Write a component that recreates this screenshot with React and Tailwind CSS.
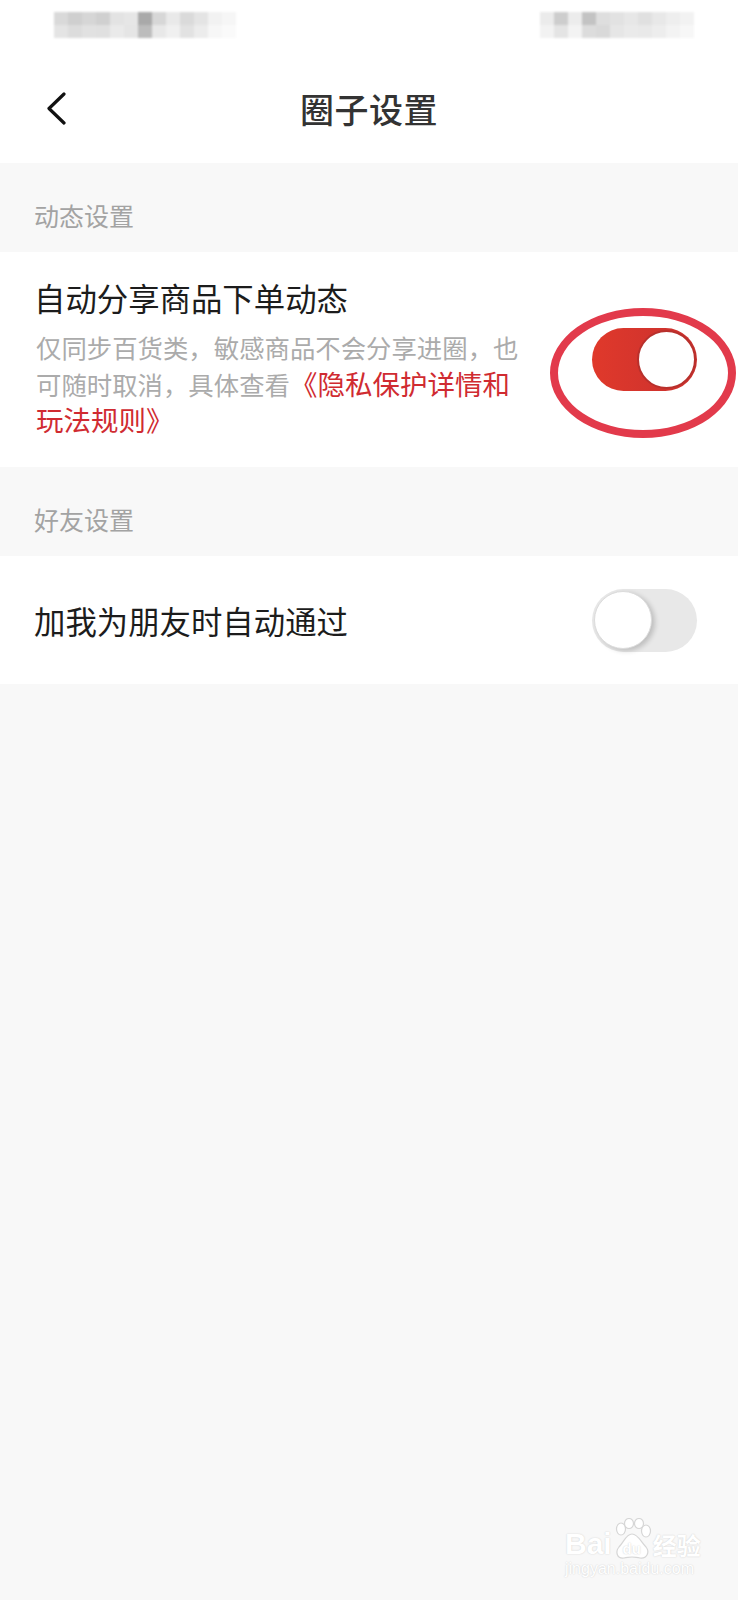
import React from "react";

const FONT = { fontFamily: '"Noto Sans CJK SC", "Noto Sans", sans-serif' };
const LATIN = { fontFamily: '"Liberation Sans", Arial, sans-serif' };

const leftTiles = [
  ["#d9d9d9", "#cfcfcf", "#d6d6d6", "#d0d0d0", "#e3e3e3", "#e6e6e6", "#a9a9a9", "#d7d7d7", "#e9e9e9", "#dadada", "#e4e4e4", "#f2f2f2", "#f6f6f6"],
  ["#e4e4e4", "#dcdcdc", "#e1e1e1", "#e0e0e0", "#eaeaea", "#e5e5e5", "#bcbcbc", "#e8e8e8", "#f0f0f0", "#e2e2e2", "#ececec", "#f7f7f7", "#fafafa"],
];
const rightTiles = [
  ["#ebebeb", "#cdcdcd", "#ececec", "#c3c3c3", "#dedede", "#e2e2e2", "#e7e7e7", "#e0e0e0", "#e8e8e8", "#eeeeee", "#f2f2f2"],
  ["#f2f2f2", "#e4e4e4", "#f3f3f3", "#dcdcdc", "#d9d9d9", "#e6e6e6", "#eaeaea", "#e9e9e9", "#ededed", "#f3f3f3", "#f7f7f7"],
];

function Mosaic({ rows }) {
  return (
    <div className="flex flex-col blur-[1px]">
      {rows.map((row, i) => (
        <div key={i} className="flex">
          {row.map((c, j) => (
            <div key={j} className="w-[14px] h-[13px]" style={{ background: c }} />
          ))}
        </div>
      ))}
    </div>
  );
}

function Toggle({ on }) {
  if (on) {
    return (
      <div className="relative w-[105px] h-[63px] rounded-full bg-gradient-to-r from-[#e0392b] to-[#c9302e] flex items-center justify-end pr-[1px]">
        <div className="w-[59px] h-[59px] rounded-full bg-white border-[2px] border-[#b8302c]" />
      </div>
    );
  }
  return (
    <div className="w-[105px] h-[63px] rounded-full bg-[#e8e8e8] flex items-center pl-[2px]">
      <div className="w-[58px] h-[58px] rounded-full bg-white border border-[#dcdcdc] shadow-[3px_2px_5px_rgba(0,0,0,0.18)]" />
    </div>
  );
}

function SectionLabel({ children }) {
  return (
    <div className="h-[89px] pt-[34px] pl-[34px] bg-[#f8f8f8]">
      <p className="text-[25px] leading-[36px] text-[#a3a3a3]">{children}</p>
    </div>
  );
}

function Paw() {
  return (
    <svg className="absolute inset-0" width="40" height="42" viewBox="0 0 40 42" fill="#fff" stroke="#d6d6d6" strokeWidth="1.2">
      <ellipse cx="9" cy="11" rx="4.5" ry="6" />
      <ellipse cx="17" cy="5.5" rx="4.5" ry="5" />
      <ellipse cx="27" cy="5.5" rx="4.5" ry="5" />
      <ellipse cx="34" cy="13" rx="4.5" ry="6" />
      <path d="M20 16 C26 16 29 24 34 29 C38 34 35 41 28 40 C24 39.5 22 39 20 39 C18 39 16 39.5 12 40 C5 41 3 34 7 29 C12 24 14 16 20 16 Z" />
    </svg>
  );
}

export default function App() {
  return (
    <div className="relative w-[738px] min-h-[1600px] bg-[#f8f8f8] overflow-hidden" style={FONT}>
      {/* status bar (pixelated) */}
      <div className="h-[54px] bg-white flex justify-between items-start pt-[12px] pl-[54px] pr-[44px]">
        <Mosaic rows={leftTiles} />
        <Mosaic rows={rightTiles} />
      </div>

      {/* header */}
      <div className="relative h-[109px] bg-white flex items-center justify-center">
        <svg
          className="absolute left-[44px] top-[38px]"
          width="24"
          height="34"
          viewBox="0 0 24 34"
          fill="none"
          stroke="#111"
          strokeWidth="3.2"
          strokeLinecap="round"
          strokeLinejoin="round"
        >
          <path d="M20 2 L5 16.5 L20 31" />
        </svg>
        <h1 className="text-[34px] font-medium text-[#333] tracking-[0.5px]">圈子设置</h1>
      </div>

      <SectionLabel>动态设置</SectionLabel>

      <div className="bg-white h-[215px] pl-[34px] pr-[41px] flex items-center justify-between">
        <div className="pb-[2px]">
          <p className="text-[31.4px] leading-[40px] text-[#1c1c1c]">自动分享商品下单动态</p>
          <p className="mt-[12px] text-[25.4px] leading-[35.5px] text-[#ababab] pl-[2px]">
            仅同步百货类，敏感商品不会分享进圈，也
            <br />
            可随时取消，具体查看
            <span className="text-[27.5px] text-[#d02b31]">
              《隐私保护详情和
              <br />
              玩法规则》
            </span>
          </p>
        </div>
        <div className="relative">
          <Toggle on />
          <div className="absolute left-[-42px] top-[-20px] w-[186px] h-[130px] rounded-[50%] border-[8px] border-[#e23a4b]" />
        </div>
      </div>

      <SectionLabel>好友设置</SectionLabel>

      <div className="bg-white h-[128px] pl-[34px] pr-[41px] flex items-center justify-between">
        <p className="text-[31.4px] leading-[40px] text-[#1c1c1c] pt-[2px]">加我为朋友时自动通过</p>
        <Toggle on={false} />
      </div>

      {/* watermark */}
      <div className="absolute left-[565px] top-[1518px] flex flex-col items-start text-white [text-shadow:0_0_1.5px_#c8c8c8]">
        <div className="flex items-end">
          <span className="text-[30px] font-bold leading-[30px] mb-[1px]" style={LATIN}>
            Bai
          </span>
          <span className="relative w-[40px] h-[42px] flex items-end justify-center pb-[3px]">
            <Paw />
            <span className="relative text-[15px] font-bold leading-[16px] text-white" style={LATIN}>
              du
            </span>
          </span>
          <span className="text-[24px] font-bold leading-[30px] ml-[1px]">经验</span>
        </div>
        <span className="text-[16px] leading-[18px] mt-[0px]" style={LATIN}>
          jingyan.baidu.com
        </span>
      </div>
    </div>
  );
}
